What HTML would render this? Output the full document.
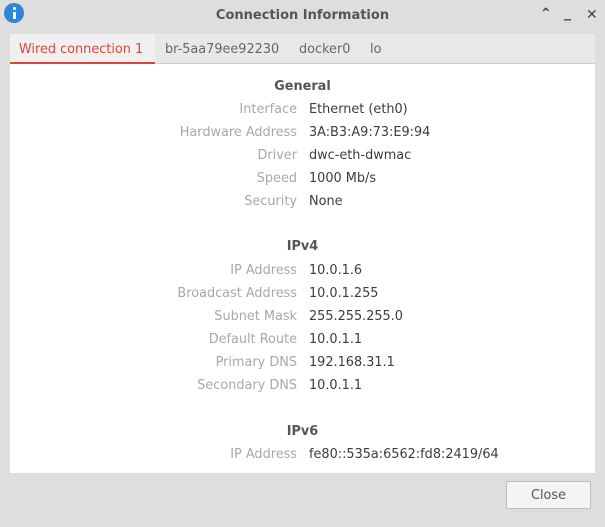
<!DOCTYPE html>
<html><head><style>
*{margin:0;padding:0;box-sizing:border-box}
body{width:605px;height:527px;background:#dedede;font-family:"DejaVu Sans","Liberation Sans",sans-serif;font-size:12.85px;position:relative;overflow:hidden;color:#3c3c3c}
.title{position:absolute;top:2px;left:0;width:605px;height:27px;text-align:center;line-height:27px;font-weight:bold;color:#555;font-size:13px}
.icon{position:absolute;left:4px;top:3px;width:20px;height:20px;border-radius:50%;background:#2f86d6}
.icon:before{content:"";position:absolute;left:8.5px;top:4px;width:3px;height:3px;background:#fff;border-radius:50%}
.icon:after{content:"";position:absolute;left:8.5px;top:8.5px;width:3px;height:7px;background:#fff}
.ctl{position:absolute;top:7px;font-weight:bold;color:#444;font-size:14px}
.tabs{position:absolute;left:10px;top:34px;width:585px;height:30px;background:#e8e8e8;border-bottom:1px solid #d0d0d0}
.tab{position:absolute;top:2px;height:28px;line-height:28px;color:#666}
.tab.a{color:#e0453c;border-bottom:2px solid #e0453c;background:#f0f0f0;left:0;top:0;height:30px;line-height:32px;width:145px;padding-left:9px}
.content{position:absolute;left:10px;top:64px;width:585px;height:409px;background:#fff}
.c{position:absolute;left:0;top:2px;width:585px;height:407px}
.h{position:absolute;width:585px;text-align:center;font-weight:bold;color:#555}
.l{position:absolute;right:298px;color:#a8a8a8;white-space:nowrap}
.v{position:absolute;left:299px;color:#3c3c3c;white-space:nowrap}
.btn{position:absolute;left:506px;top:481px;width:85px;height:28px;border:1px solid #bdbdbd;border-radius:2px;background:#f4f4f4;text-align:center;line-height:28px;color:#555}
</style></head><body>
<div class="icon"></div>
<div class="title">Connection Information</div>
<div class="ctl" style="left:540px;top:6px">&#8963;</div>
<div class="ctl" style="left:564px;top:5px">_</div>
<div class="ctl" style="left:586px">&#10005;</div>
<div class="tabs">
<div class="tab a">Wired connection 1</div>
<div class="tab" style="left:155px">br-5aa79ee92230</div>
<div class="tab" style="left:289px">docker0</div>
<div class="tab" style="left:360px">lo</div>
</div>
<div class="content"><div class="c">
<div class="h" style="top:13px">General</div>
<div class="l" style="top:36px">Interface</div><div class="v" style="top:36px">Ethernet (eth0)</div>
<div class="l" style="top:59px">Hardware Address</div><div class="v" style="top:59px">3A:B3:A9:73:E9:94</div>
<div class="l" style="top:82px">Driver</div><div class="v" style="top:82px">dwc-eth-dwmac</div>
<div class="l" style="top:105px">Speed</div><div class="v" style="top:105px">1000 Mb/s</div>
<div class="l" style="top:128px">Security</div><div class="v" style="top:128px">None</div>
<div class="h" style="top:173px">IPv4</div>
<div class="l" style="top:197px">IP Address</div><div class="v" style="top:197px">10.0.1.6</div>
<div class="l" style="top:220px">Broadcast Address</div><div class="v" style="top:220px">10.0.1.255</div>
<div class="l" style="top:243px">Subnet Mask</div><div class="v" style="top:243px">255.255.255.0</div>
<div class="l" style="top:266px">Default Route</div><div class="v" style="top:266px">10.0.1.1</div>
<div class="l" style="top:289px">Primary DNS</div><div class="v" style="top:289px">192.168.31.1</div>
<div class="l" style="top:312px">Secondary DNS</div><div class="v" style="top:312px">10.0.1.1</div>
<div class="h" style="top:358px">IPv6</div>
<div class="l" style="top:381px">IP Address</div><div class="v" style="top:381px">fe80::535a:6562:fd8:2419/64</div>
</div></div>
<div class="btn">Close</div>
</body></html>
